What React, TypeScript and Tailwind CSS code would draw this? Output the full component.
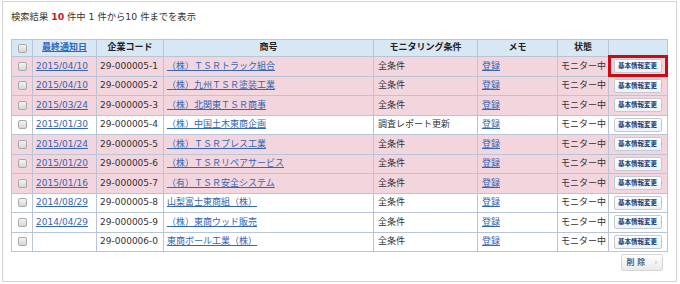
import React from 'react';

type Row = {
  date: string;
  code: string;
  name: string;
  cond: string;
  pink: boolean;
};

const rows: Row[] = [
  { date: '2015/04/10', code: '29-000005-1', name: '（株）ＴＳＲトラック組合', cond: '全条件', pink: true },
  { date: '2015/04/10', code: '29-000005-2', name: '（株）九州ＴＳＲ塗装工業', cond: '全条件', pink: true },
  { date: '2015/03/24', code: '29-000005-3', name: '（株）北関東ＴＳＲ商事', cond: '全条件', pink: true },
  { date: '2015/01/30', code: '29-000005-4', name: '（株）中国土木東商企画', cond: '調査レポート更新', pink: false },
  { date: '2015/01/24', code: '29-000005-5', name: '（株）ＴＳＲプレス工業', cond: '全条件', pink: true },
  { date: '2015/01/20', code: '29-000005-6', name: '（株）ＴＳＲリペアサービス', cond: '全条件', pink: true },
  { date: '2015/01/16', code: '29-000005-7', name: '（有）ＴＳＲ安全システム', cond: '全条件', pink: true },
  { date: '2014/08/29', code: '29-000005-8', name: '山梨富士東商組（株）', cond: '全条件', pink: false },
  { date: '2014/04/29', code: '29-000005-9', name: '（株）東商ウッド販売', cond: '全条件', pink: false },
  { date: '', code: '29-000006-0', name: '東商ボール工業（株）', cond: '全条件', pink: false },
];

const Check = () => (
  <input
    type="checkbox"
    className="appearance-none block mx-auto w-[9px] h-[9px] rounded-[2px] border border-[#a9a9a9] bg-gradient-to-b from-[#f4f4f4] to-[#d6d6d6]"
  />
);

const EditButton = () => (
  <span className="inline-flex items-center gap-[3px] h-[14px] w-[48px] pl-[3px] border border-[#c2cad6] rounded-[2px] bg-gradient-to-b from-white to-[#eef1f5] text-[6.5px] font-bold text-[#223f7a] leading-none">
    基本情報変更
    <span className="text-[#b8b8b8] font-normal text-[7px]">›</span>
  </span>
);

export default function App() {
  const cell = 'border border-[#b9c5d6] px-[3px] whitespace-nowrap';
  const link = 'text-[#3466b6] underline';

  return (
    <div
      className="ml-[2px] mt-[1px] w-[675px] h-[281px] border border-[#d3d3d3] bg-white pl-[8px] pt-[9px] text-[9px] text-[#333]"
      style={{ fontFamily: '"DejaVu Sans", "Noto Sans CJK JP", sans-serif' }}
    >
      {/* Result count */}
      <p className="leading-[12px] text-[9.3px]">
        検索結果 <span className="font-bold text-[#c8161d]">10</span> 件中 1 件から10 件までを表示
      </p>

      {/* Result table */}
      <table className="mt-[16px] w-[656px] table-fixed border-collapse">
        <colgroup>
          <col className="w-[21px]" />
          <col className="w-[64px]" />
          <col className="w-[67px]" />
          <col className="w-[210px]" />
          <col className="w-[104px]" />
          <col className="w-[80px]" />
          <col className="w-[51px]" />
          <col className="w-[59px]" />
        </colgroup>
        <thead>
          <tr className="h-[17px] bg-[#d8e7f4] font-bold text-[#222]">
            <th className={cell}>
              <Check />
            </th>
            <th className={cell}>
              <span className={link}>最終通知日</span>
            </th>
            <th className={cell}>企業コード</th>
            <th className={cell}>商号</th>
            <th className={cell}>モニタリング条件</th>
            <th className={cell}>メモ</th>
            <th className={cell}>状態</th>
            <th className={cell}></th>
          </tr>
        </thead>
        <tbody>
          {rows.map((r, i) => (
            <tr key={r.code} className={r.pink ? 'h-[19.5px] bg-[#f2d5dd]' : 'h-[19.5px] bg-white'}>
              <td className={cell}>
                <Check />
              </td>
              <td className={cell}>
                <span className={link}>{r.date}</span>
              </td>
              <td className={cell}>{r.code}</td>
              <td className={cell}>
                <span className={link}>{r.name}</span>
              </td>
              <td className={`${cell} pl-[4px]`}>{r.cond}</td>
              <td className={`${cell} pl-[4px]`}>
                <span className={link}>登録</span>
              </td>
              <td className={`${cell} px-[2px] text-right`}>モニター中</td>
              <td className={`${cell} relative text-center`}>
                <EditButton />
                {i === 0 && (
                  <div className="absolute -left-px -right-px -top-[2px] -bottom-px border-[3px] border-[#cc0a14]" />
                )}
              </td>
            </tr>
          ))}
        </tbody>
      </table>

      {/* Delete */}
      <div className="mt-[2px] w-[652px] flex justify-end">
        <button className="flex items-center justify-center gap-[9px] w-[42px] h-[17px] border border-[#d6d6d6] rounded-[2px] bg-gradient-to-b from-white to-[#e9e9e9] text-[8px] font-bold text-[#4f6383] leading-none">
          <span>削 除</span>
          <span className="text-[#bcbcbc] font-normal">›</span>
        </button>
      </div>
    </div>
  );
}
